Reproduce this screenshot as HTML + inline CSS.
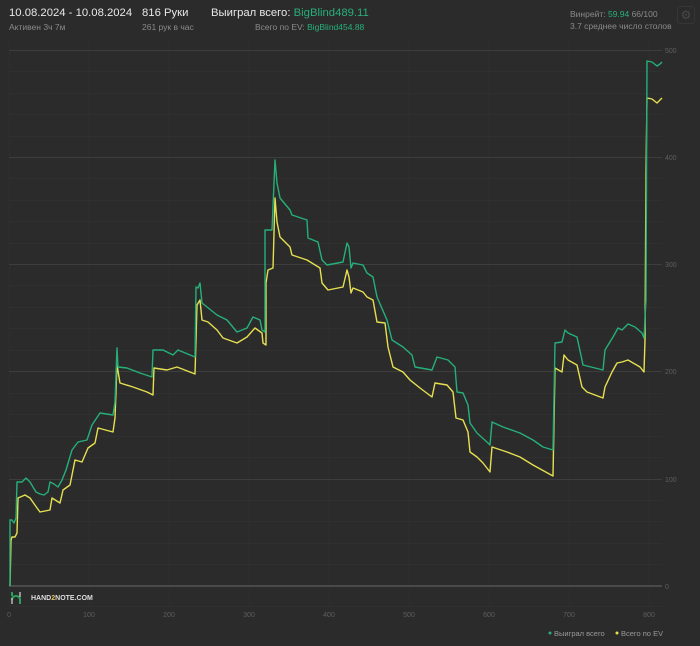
<!DOCTYPE html>
<html><head><meta charset="utf-8"><style>
html,body{margin:0;padding:0;background:#2b2b2b;width:700px;height:646px;overflow:hidden;font-family:"Liberation Sans",sans-serif;}
.t{position:absolute;white-space:nowrap;}
</style></head><body>
<div class="t" style="left:9px;top:7px;font-size:11.3px;color:#e8e8e8">10.08.2024 - 10.08.2024</div>
<div class="t" style="left:9px;top:22px;font-size:8.5px;color:#8a8a8a">Активен 3ч 7м</div>
<div class="t" style="left:142px;top:7px;font-size:11.3px;color:#e8e8e8">816 Руки</div>
<div class="t" style="left:142px;top:22px;font-size:8.5px;color:#8a8a8a">261 рук в час</div>
<div class="t" style="left:211px;top:7px;font-size:11.3px;color:#e8e8e8">Выиграл всего: <span style="color:#27b07a">BigBlind489.11</span></div>
<div class="t" style="left:255px;top:22px;font-size:8.5px;color:#8a8a8a">Всего по EV: <span style="color:#27b07a">BigBlind454.88</span></div>
<div class="t" style="left:570px;top:9px;font-size:8.5px;color:#8a8a8a">Винрейт: <span style="color:#27b07a">59.94</span> 66/100</div>
<div class="t" style="left:570px;top:21px;font-size:8.5px;color:#8a8a8a">3.7 среднее число столов</div>
<div class="t" style="left:677px;top:6px;width:16px;height:16px;border:1px solid #363636;border-radius:3px;color:#4a4a4a;font-size:12px;text-align:center;line-height:16px">⚙</div>
<svg width="700" height="646" style="position:absolute;left:0;top:0" xmlns="http://www.w3.org/2000/svg">
<g stroke="#2f2f2f" stroke-width="1">
<line x1="89.5" y1="40" x2="89.5" y2="606"/><line x1="169.5" y1="40" x2="169.5" y2="606"/><line x1="249.5" y1="40" x2="249.5" y2="606"/><line x1="329.5" y1="40" x2="329.5" y2="606"/><line x1="409.5" y1="40" x2="409.5" y2="606"/><line x1="489.5" y1="40" x2="489.5" y2="606"/><line x1="569.5" y1="40" x2="569.5" y2="606"/><line x1="649.5" y1="40" x2="649.5" y2="606"/><line x1="9.5" y1="40" x2="9.5" y2="606"/>
</g>
<g stroke="#303030" stroke-width="1">
<line x1="9" y1="71.5" x2="662" y2="71.5"/><line x1="9" y1="93.5" x2="662" y2="93.5"/><line x1="9" y1="114.5" x2="662" y2="114.5"/><line x1="9" y1="136.5" x2="662" y2="136.5"/>
<line x1="9" y1="178.5" x2="662" y2="178.5"/><line x1="9" y1="200.5" x2="662" y2="200.5"/><line x1="9" y1="221.5" x2="662" y2="221.5"/><line x1="9" y1="243.5" x2="662" y2="243.5"/>
<line x1="9" y1="285.5" x2="662" y2="285.5"/><line x1="9" y1="307.5" x2="662" y2="307.5"/><line x1="9" y1="328.5" x2="662" y2="328.5"/><line x1="9" y1="350.5" x2="662" y2="350.5"/>
<line x1="9" y1="393.5" x2="662" y2="393.5"/><line x1="9" y1="414.5" x2="662" y2="414.5"/><line x1="9" y1="436.5" x2="662" y2="436.5"/><line x1="9" y1="457.5" x2="662" y2="457.5"/>
<line x1="9" y1="500.5" x2="662" y2="500.5"/><line x1="9" y1="521.5" x2="662" y2="521.5"/><line x1="9" y1="543.5" x2="662" y2="543.5"/><line x1="9" y1="564.5" x2="662" y2="564.5"/>
<line x1="9" y1="606.5" x2="662" y2="606.5"/>
</g>
<g stroke="#3d3d3d" stroke-width="1">
<line x1="9" y1="50.5" x2="662" y2="50.5"/><line x1="9" y1="157.5" x2="662" y2="157.5"/><line x1="9" y1="264.5" x2="662" y2="264.5"/><line x1="9" y1="371.5" x2="662" y2="371.5"/><line x1="9" y1="479.5" x2="662" y2="479.5"/>
</g>
<line x1="9" y1="586" x2="662" y2="586" stroke="#555" stroke-width="1.5"/>
<g font-family="Liberation Sans, sans-serif" font-size="7" fill="#5e5e5e">
<text x="665" y="53">500</text><text x="665" y="160">400</text><text x="665" y="267">300</text><text x="665" y="374">200</text><text x="665" y="482">100</text><text x="665" y="589">0</text>
<g text-anchor="middle"><text x="9" y="617">0</text><text x="89" y="617">100</text><text x="169" y="617">200</text><text x="249" y="617">300</text><text x="329" y="617">400</text><text x="409" y="617">500</text><text x="489" y="617">600</text><text x="569" y="617">700</text><text x="649" y="617">800</text></g>
</g>
<polyline fill="none" stroke="#e6e050" stroke-width="1.4" stroke-linejoin="round" points="10,586 11,540 12,537 15,537 17,533 18,498 25,495 30,498 37,508 40,512 50,510 52,498 60,503 63,490 70,485 75,460 82,462 88,448 95,443 98,428 113,432 115,418 117,365 120,383 133,387 147,392 153,395 154,368 167,370 177,367 195,374 197,305 200,300 202,320 208,322 217,330 223,338 237,343 247,337 255,328 262,333 263,343 266,345 266,283 268,270 273,268 275,198 277,222 280,237 290,247 292,255 307,260 320,268 322,283 328,290 343,287 347,270 349,277 351,293 353,288 363,292 367,297 373,300 377,322 385,323 388,347 393,367 403,372 410,380 420,388 432,397 435,383 447,385 453,392 456,418 463,420 468,432 470,452 477,457 483,463 490,472 492,447 507,452 520,457 533,465 553,476 555,368 562,372 564,355 568,360 577,365 582,387 587,392 603,398 605,387 612,372 617,363 622,362 628,360 640,367 644,372 645,340 646,172 647,98 652,99 657,103 660,100 662,98"/>
<polyline fill="none" stroke="#25b07a" stroke-width="1.4" stroke-linejoin="round" points="10,586 10,520 12,520 14,523 16,518 17,482 22,482 26,478 30,482 36,492 40,494 44,495 48,492 50,482 54,484 58,487 62,480 66,470 72,450 78,442 87,440 92,425 100,413 113,415 115,402 117,348 118,367 127,368 140,373 152,377 153,350 163,350 173,355 178,350 195,357 196,287 198,288 200,283 202,303 207,307 217,315 227,320 237,332 247,328 253,317 260,320 262,330 265,332 265,230 272,230 275,160 277,183 280,198 290,210 292,215 307,220 308,238 318,242 322,260 327,265 343,262 347,243 349,247 351,268 353,263 363,265 367,273 373,277 377,297 387,320 392,340 403,347 412,355 415,367 432,370 437,357 448,360 455,367 457,392 463,393 468,405 470,423 477,433 488,443 490,445 492,422 503,427 520,433 533,440 543,447 553,450 555,343 562,342 565,330 568,333 577,337 582,360 583,365 603,370 605,350 613,337 618,328 622,330 628,324 635,327 642,333 644,338 646,300 647,61 652,62 657,66 660,64 662,62"/>
<g fill="none" stroke="#2e9e5a" stroke-width="2"><path d="M12,592 v4"/><path d="M12,600 q0,-4 4,-4 q4,0 4,4"/><path d="M20,600 v4"/></g>
<line x1="12" y1="598" x2="12" y2="604" stroke="#ccc" stroke-width="1.3"/><line x1="20" y1="592" x2="20" y2="597" stroke="#ccc" stroke-width="1.3"/>
<text x="31" y="600" font-family="Liberation Sans, sans-serif" font-size="7" font-weight="bold" fill="#ddd">HAND<tspan fill="#e0c050">2</tspan>NOTE.COM</text>
<circle cx="550" cy="633" r="1.5" fill="#25b07a"/><circle cx="617" cy="633" r="1.5" fill="#e6e050"/>
<text x="554" y="636" font-family="Liberation Sans, sans-serif" font-size="7.5" fill="#999">Выиграл всего</text>
<text x="621" y="636" font-family="Liberation Sans, sans-serif" font-size="7.5" fill="#999">Всего по EV</text>
</svg>
</body></html>
